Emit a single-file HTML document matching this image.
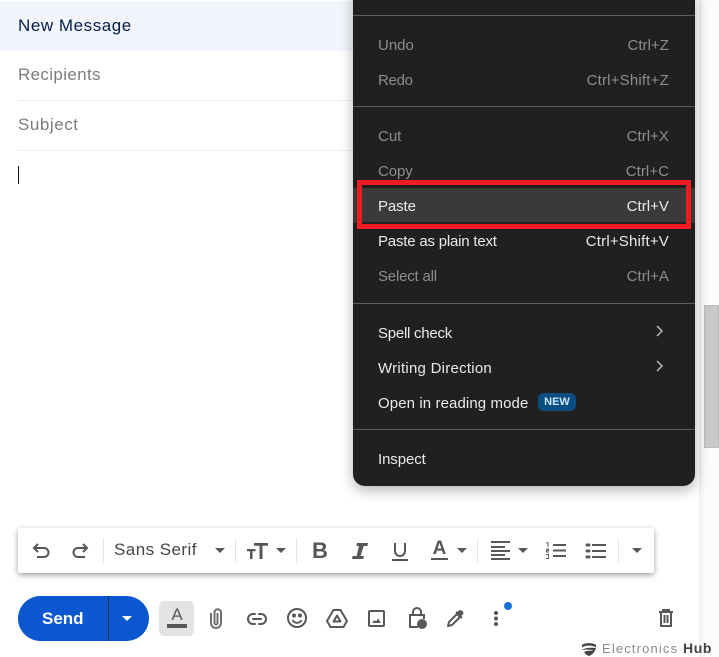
<!DOCTYPE html>
<html><head><meta charset="utf-8"><style>
html,body{margin:0;padding:0;background:#fff}
body{position:relative;width:719px;height:657px;overflow:hidden;font-family:"Liberation Sans",sans-serif}
.a{position:absolute;white-space:nowrap}
.m{font-size:15px;line-height:20px;left:378px}
.s{font-size:15px;line-height:20px;right:50px;letter-spacing:.05px}
.d{color:#8b8e91}.l{color:#e8eaed}
.hr{position:absolute;left:353px;width:342px;height:1px;background:#5c5c5c}
.sep{position:absolute;top:538px;width:1px;height:25px;background:#e4e4e4}
svg{position:absolute;overflow:visible}
.i{fill:none;stroke:#555857;stroke-width:2}
.c{position:absolute;width:0;height:0;border-left:5px solid transparent;border-right:5px solid transparent;border-top:5px solid #555857}
</style></head><body>
<div class="a" style="left:0;top:1px;width:353px;height:50px;background:#f2f6fc"></div>
<div class="a" style="left:18px;top:16px;font-size:17px;line-height:20px;color:#041e49;letter-spacing:.55px">New Message</div>
<div class="a" style="left:18px;top:65px;font-size:17px;line-height:20px;color:#7a7d80;letter-spacing:.35px">Recipients</div>
<div class="a" style="left:18px;top:100px;width:335px;height:1px;background:#ececec"></div>
<div class="a" style="left:18px;top:115px;font-size:17px;line-height:20px;color:#7a7d80;letter-spacing:.55px">Subject</div>
<div class="a" style="left:18px;top:150px;width:335px;height:1px;background:#ececec"></div>
<div class="a" style="left:18px;top:166px;width:1px;height:18px;background:#111"></div>

<div class="a" style="left:699px;top:0;width:20px;height:657px;background:linear-gradient(90deg,#eef0f2,#fafbfc 6px,#fcfcfd)"></div>
<div class="a" style="left:704px;top:305px;width:15px;height:143px;background:#c9c9c9;border:1px solid #bbb;box-sizing:border-box"></div>

<div class="a" style="left:353px;top:-10px;width:342px;height:496px;background:#202020;border-radius:0 0 12px 12px;box-shadow:0 4px 14px rgba(0,0,0,.3)"></div>
<div class="hr" style="top:15px"></div>
<div class="hr" style="top:106px"></div>
<div class="hr" style="top:303px"></div>
<div class="hr" style="top:429px"></div>
<div class="a m d" style="top:36px">Undo</div><div class="a s d" style="top:36px">Ctrl+Z</div>
<div class="a m d" style="top:71px;letter-spacing:-.3px">Redo</div><div class="a s d" style="top:71px;letter-spacing:.2px">Ctrl+Shift+Z</div>
<div class="a m d" style="top:127px">Cut</div><div class="a s d" style="top:127px">Ctrl+X</div>
<div class="a m d" style="top:162px;letter-spacing:-.1px">Copy</div><div class="a s d" style="top:162px">Ctrl+C</div>
<div class="a" style="left:353px;top:188px;width:342px;height:35px;background:#3a3a38"></div>
<div class="a" style="left:357px;top:180px;width:334px;height:49px;box-sizing:border-box;border:5px solid #ed1c24;background:#202020"></div>
<div class="a" style="left:362px;top:188px;width:324px;height:34px;background:#3a3a38"></div>
<div class="a m l" style="top:197px;letter-spacing:-.1px">Paste</div><div class="a s l" style="top:197px">Ctrl+V</div>
<div class="a m l" style="top:232px;letter-spacing:-.2px">Paste as plain text</div><div class="a s l" style="top:232px;letter-spacing:.2px">Ctrl+Shift+V</div>
<div class="a m d" style="top:267px;letter-spacing:-.2px">Select all</div><div class="a s d" style="top:267px">Ctrl+A</div>
<div class="a m l" style="top:324px;letter-spacing:-.25px">Spell check</div>
<div class="a m l" style="top:359px;letter-spacing:.25px">Writing Direction</div>
<div class="a m l" style="top:394px;letter-spacing:.1px">Open in reading mode</div>
<svg style="left:656px;top:325px" width="10" height="50"><path d="M1 1l5 5-5 5M1 36l5 5-5 5" fill="none" stroke="#b5b7b9" stroke-width="1.5"/></svg>
<div class="a" style="left:538px;top:393px;width:38px;height:18px;border-radius:6px;background:#0b4f82;color:#c9e6fc;font-size:11px;font-weight:bold;line-height:18px;text-align:center">NEW</div>
<div class="a m l" style="top:450px;letter-spacing:-.1px">Inspect</div>

<div class="a" style="left:18px;top:528px;width:636px;height:45px;background:#fff;border-radius:2px;box-shadow:0 2px 6px rgba(0,0,0,.4)"></div>
<svg class="i" style="left:32px;top:543px" width="18" height="15"><path d="M2 5h10a4.500 4.500 0 0 1 0 9H5M6 1L2 5l4 4"/></svg>
<svg class="i" style="left:72px;top:543px" width="18" height="15"><path d="M15 5H6a4.500 4.500 0 0 0 0 9h7M11 1l4 4-4 4"/></svg>
<div class="sep" style="left:103px"></div>
<div class="a" style="left:114px;top:540px;font-size:17px;line-height:20px;color:#444746;letter-spacing:.45px">Sans Serif</div>
<div class="c" style="left:215px;top:548px"></div>
<div class="sep" style="left:235px"></div>
<svg style="left:247px;top:543px" width="22" height="16"><path d="M7 0h14v2.700h-5.500V16h-3V2.700H7zM0 6h8.500v2.200H5.500V16H3V8.200H0z" fill="#555857"/></svg>
<div class="c" style="left:276px;top:548px"></div>
<div class="sep" style="left:296px"></div>
<div class="a" style="left:312px;top:538px;font-size:22px;font-weight:bold;line-height:25px;color:#555857">B</div>
<svg style="left:352px;top:543px" width="16" height="16"><path d="M5 0h11l-.6 3h-3.700L8.500 13h3.400l-.6 3H0l.6-3h4.100L6.900 3H4.400z" fill="#555857"/></svg>
<svg class="i" style="left:392px;top:543px" width="16" height="18"><path d="M3 0v8a5 5 0 0 0 10 0V0M0 17h16"/></svg>
<div class="a" style="left:431px;top:540px;font-size:19px;font-weight:bold;line-height:18px;color:#555857;width:17px;text-align:center">A</div>
<div class="a" style="left:431px;top:558px;width:17px;height:2px;background:#555857"></div>
<div class="c" style="left:457px;top:548px"></div>
<div class="sep" style="left:477px"></div>
<svg class="i" style="left:491px;top:541px" width="20" height="19"><path d="M0 1h19M0 6h14M0 10h19M0 14h14M0 18h19"/></svg>
<div class="c" style="left:518px;top:548px"></div>
<svg class="i" style="left:546px;top:542px" width="21" height="17"><path d="M7 3h13M7 8.500h13M7 14h13"/><path d="M0 .7h2v4M0 7h2.500v1.500H.5V10h2.500M0 12.500h2.500v4H0" stroke-width="1"/></svg>
<svg class="i" style="left:586px;top:543px" width="21" height="16"><path d="M6 2h14M6 8h14M6 14h14"/><path d="M1 2h2M1 8h2M1 14h2" stroke-linecap="round" stroke-width="3"/></svg>
<div class="sep" style="left:618px"></div>
<div class="c" style="left:632px;top:548px"></div>

<div class="a" style="left:18px;top:596px;width:131px;height:45px;border-radius:23px;background:#0b57d0"></div>
<div class="a" style="left:108px;top:596px;width:1px;height:45px;background:#0a2f66"></div>
<div class="a" style="left:42px;top:608px;font-size:17px;font-weight:bold;line-height:22px;color:#fff">Send</div>
<div class="c" style="left:122px;top:616px;border-top-color:#fff"></div>
<div class="a" style="left:159px;top:601px;width:35px;height:35px;border-radius:5px;background:#e3e3e3"></div>
<div class="a" style="left:167px;top:606px;width:20px;text-align:center;font-size:17px;line-height:18px;color:#555857">A</div>
<div class="a" style="left:167px;top:624px;width:20px;height:4px;background:#555857"></div>
<svg class="i" style="left:210px;top:608px" width="12" height="20"><path d="M1 5v10a5 5 0 0 0 10 0V4a3.300 3.300 0 0 0-6.500 0v11a1.500 1.500 0 0 0 3 0V5" stroke="#6b6e6d"/></svg>
<svg class="i" style="left:247px;top:613px" width="20" height="12"><path d="M8 1H6a5 5 0 0 0 0 10h2M12 1h2a5 5 0 0 1 0 10h-2M6 6h8" stroke-linecap="round"/></svg>
<svg class="i" style="left:287px;top:608px" width="20" height="20"><circle cx="10" cy="10" r="9"/><path d="M5.500 12a5 5 0 0 0 9 0"/><circle cx="7" cy="7.500" r="1" fill="#555857"/><circle cx="13" cy="7.500" r="1" fill="#555857"/></svg>
<svg class="i" style="left:326px;top:609px" width="22" height="19"><path d="M7.500 1h7L21 12l-3.500 6h-13L1 12z" stroke-linejoin="round"/><path d="M11 6.500L7.500 12.500h7z" stroke-linejoin="round"/></svg>
<svg class="i" style="left:368px;top:610px" width="17" height="17"><rect x="1" y="1" width="15" height="15" rx="1"/><path d="M4 13l2.500-3 1.500 1.500 2-3 3 4.500z" fill="#555857" stroke="none"/></svg>
<svg class="i" style="left:409px;top:607px" width="18" height="22"><path d="M4 8V5a4 4 0 0 1 8 0v3M9 20H1V8h14v4"/><circle cx="13" cy="17" r="5" fill="#555857" stroke="none"/></svg>
<svg class="i" style="left:447px;top:609px" width="19" height="18"><path d="M1 17l1-4 8-8 3 3-8 8zM9 3l6 6" stroke-linejoin="round"/><path d="M12 1.500c2-1.500 5.500 1.500 4 4l-2 1.500-4-4z" fill="#555857" stroke="none"/></svg>
<svg style="left:494px;top:611px" width="5" height="16"><circle cx="2" cy="2" r="2" fill="#555857"/><circle cx="2" cy="7.500" r="2" fill="#555857"/><circle cx="2" cy="13" r="2" fill="#555857"/></svg>
<div class="a" style="left:504px;top:602px;width:8px;height:8px;border-radius:50%;background:#1a6fdc"></div>
<svg class="i" style="left:659px;top:609px" width="14" height="18"><path d="M0 3h14M4 3V1h6v2M2 3v14h10V3M5.500 6v8M8.500 6v8"/></svg>

<svg style="left:581px;top:642px" width="16" height="14"><path d="M1 3C4 .5 12 .5 15 3v2.500C12 3 4 3 1 5.500zM1 8c3-2.500 10-2.500 14-2-1 4-4 7-7 8-2-.7-4-2-5-4 3-1.500 6-1.500 8-1.200L12 8C9 7.500 4 7.500 1 8z" fill="#444"/></svg>
<div class="a" style="left:602px;top:640px;font-size:13px;line-height:16px;color:#8a8a8a;letter-spacing:1.150px">Electronics <b style="color:#444;font-size:14px;letter-spacing:.6px">Hub</b></div>
</body></html>
